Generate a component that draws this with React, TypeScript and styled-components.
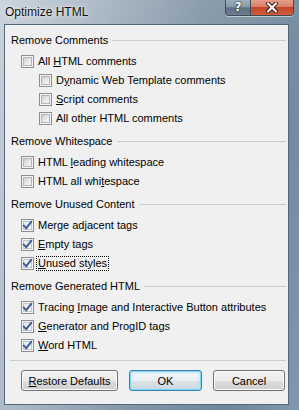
import React from 'react';
import styled, { createGlobalStyle } from 'styled-components';

const GlobalStyle = createGlobalStyle`
  html, body {
    margin: 0;
    padding: 0;
    background: #6f8aa3;
  }
`;

type Option = {
  label: React.ReactNode;
  checked?: boolean;
  nested?: boolean;
  focused?: boolean;
};

type Section = {
  title: string;
  options: Option[];
};

// mnemonic helper: underline one letter
const K = ({ children }: { children: React.ReactNode }) => <Key>{children}</Key>;

const sections: Section[] = [
  {
    title: 'Remove Comments',
    options: [
      { label: <>All <K>H</K>TML comments</> },
      { label: <>D<K>y</K>namic Web Template comments</>, nested: true },
      { label: <><K>S</K>cript comments</>, nested: true },
      { label: <>All other HTML comments</>, nested: true },
    ],
  },
  {
    title: 'Remove Whitespace',
    options: [
      { label: <>HTML <K>l</K>eading whitespace</> },
      { label: <>HTML all whi<K>t</K>espace</> },
    ],
  },
  {
    title: 'Remove Unused Content',
    options: [
      { label: <>Merge ad<K>j</K>acent tags</>, checked: true },
      { label: <><K>E</K>mpty tags</>, checked: true },
      { label: <><K>U</K>nused styles</>, checked: true, focused: true },
    ],
  },
  {
    title: 'Remove Generated HTML',
    options: [
      { label: <>Tracing <K>I</K>mage and Interactive Button attributes</>, checked: true },
      { label: <><K>G</K>enerator and ProgID tags</>, checked: true },
      { label: <><K>W</K>ord HTML</>, checked: true },
    ],
  },
];

const CheckBox: React.FC<{ checked?: boolean }> = ({ checked }) => (
  <BoxOuter>
    <BoxInner $checked={checked}>
      {checked && (
        <svg width="11" height="11" viewBox="0 0 11 11">
          <path d="M1.8 5.6 L4.2 8.2 L9.2 1.8" fill="none" stroke="#3d5b94" strokeWidth="1.9" strokeLinecap="square" />
        </svg>
      )}
    </BoxInner>
  </BoxOuter>
);

const App: React.FC = () => {
  return (
    <>
      <GlobalStyle />
      <Window>
        <TitleBar>
          <Title>Optimize HTML</Title>
          <CaptionButtons>
            <HelpButton>?</HelpButton>
            <CloseButton>
              <svg width="14" height="11" viewBox="0 0 14 11">
                <path d="M3 1.5 L11 9.5 M11 1.5 L3 9.5" stroke="#3a1a14" strokeWidth="4" strokeLinecap="round" />
                <path d="M3 1.5 L11 9.5 M11 1.5 L3 9.5" stroke="#ffffff" strokeWidth="2.2" strokeLinecap="round" />
              </svg>
            </CloseButton>
          </CaptionButtons>
        </TitleBar>
        <Client>
          <Body>
            {sections.map((s) => (
              <Group key={s.title}>
                <Heading>
                  <span>{s.title}</span>
                  <Rule />
                </Heading>
                {s.options.map((o, i) => (
                  <Row key={i} $nested={o.nested}>
                    <CheckBox checked={o.checked} />
                    <Label $focused={o.focused}>{o.label}</Label>
                  </Row>
                ))}
              </Group>
            ))}
          </Body>
          <Separator />
          <ButtonRow>
            <Button $w={97}>
              <K>R</K>estore Defaults
            </Button>
            <Button $w={73} $default>OK</Button>
            <Button $w={72}>Cancel</Button>
          </ButtonRow>
        </Client>
      </Window>
    </>
  );
};

export default App;

const Window = styled.div`
  width: 299px;
  height: 410px;
  display: flex;
  flex-direction: column;
  background:
    linear-gradient(180deg, rgba(255,255,255,0.08) 0%, rgba(255,255,255,0) 30%),
    linear-gradient(100deg, #c7d1da 0%, #a9b7c3 25%, #8295a6 55%, #6f879c 80%, #7f98ae 100%);
  overflow: hidden;
`;

const TitleBar = styled.div`
  height: 24px;
  display: flex;
  align-items: flex-start;
  padding: 0 5px;
`;

const Title = styled.div`
  font-family: "Liberation Sans", Arial, sans-serif;
  font-size: 12px;
  line-height: 24px;
  color: #101010;
  text-shadow: 0 0 6px rgba(255, 255, 255, 0.9), 0 0 2px rgba(255, 255, 255, 0.7);
`;

const CaptionButtons = styled.div`
  margin-left: auto;
  display: flex;
  margin-top: -1px;
  border: 1px solid #3f4a55;
  border-top: none;
  border-radius: 0 0 4px 4px;
  overflow: hidden;
  box-shadow: 0 1px 0 rgba(255, 255, 255, 0.5);
`;

const HelpButton = styled.div`
  width: 24px;
  height: 16px;
  display: flex;
  align-items: center;
  justify-content: center;
  font-family: "DejaVu Sans", sans-serif;
  font-weight: bold;
  font-size: 12px;
  color: #fff;
  text-shadow: 0 0 2px #222, 0 0 1px #000;
  background: linear-gradient(180deg, #9fb0bf 0%, #8798a8 50%, #5d6f80 55%, #6c7f91 100%);
  border-right: 1px solid #3f4a55;
`;

const CloseButton = styled.div`
  width: 42px;
  height: 16px;
  display: flex;
  align-items: center;
  justify-content: center;
  background: linear-gradient(180deg, #e8a493 0%, #d88069 48%, #c2452b 52%, #d25c3c 100%);
`;

const Client = styled.div`
  flex: 1;
  margin: 0 10px 5px 4px;
  background: #f0f0f0;
  border: 1px solid #55687b;
  display: flex;
  flex-direction: column;
  font-family: "Liberation Sans", Arial, sans-serif;
  font-size: 11px;
  color: #000;
`;

const Body = styled.div`
  padding: 8px 2px 0 6px;
  display: flex;
  flex-direction: column;
  gap: 6px;
`;

const Group = styled.div`
  display: flex;
  flex-direction: column;
`;

const Heading = styled.div`
  height: 14px;
  display: flex;
  align-items: center;
  gap: 4px;
  margin-bottom: 5px;
  white-space: nowrap;
`;

const Rule = styled.div`
  flex: 1;
  height: 0;
  border-top: 1px solid #c9ccd0;
  margin-top: 1px;
`;

const Row = styled.div<{ $nested?: boolean }>`
  height: 19px;
  display: flex;
  align-items: center;
  gap: 3px;
  padding-left: ${(p) => (p.$nested ? '28px' : '10px')};
`;

const BoxOuter = styled.div`
  width: 13px;
  height: 13px;
  box-sizing: border-box;
  border: 1px solid #8e8f8f;
  background: #f4f4f4;
  padding: 1px;
  flex-shrink: 0;
`;

const BoxInner = styled.div<{ $checked?: boolean }>`
  width: 100%;
  height: 100%;
  box-sizing: border-box;
  display: flex;
  align-items: center;
  justify-content: center;
  border: 1px solid ${(p) => (p.$checked ? '#c2c6cc' : '#b2b5ba')};
  background: ${(p) =>
    p.$checked
      ? 'linear-gradient(135deg, #e6e8eb 0%, #f8f8f8 100%)'
      : 'linear-gradient(135deg, #cdd0d4 0%, #e9eaeb 60%, #f7f7f7 100%)'};
  overflow: visible;

  svg {
    margin: -2px;
  }
`;

const Label = styled.span<{ $focused?: boolean }>`
  white-space: nowrap;
  line-height: 13px;
  padding: 0 1px;
  outline: ${(p) => (p.$focused ? '1px dotted #000' : 'none')};
  outline-offset: 0;
`;

const Key = styled.span`
  text-decoration: underline;
  text-underline-offset: 1px;
`;

const Separator = styled.div`
  margin: 5px 2px 0 5px;
  border-top: 1px solid #c9ccd0;
`;

const ButtonRow = styled.div`
  display: flex;
  gap: 11px;
  padding: 9px 0 0 16px;
`;

const Button = styled.div<{ $default?: boolean; $w: number }>`
  width: ${(p) => p.$w}px;
  height: 21px;
  box-sizing: border-box;
  flex-shrink: 0;
  display: flex;
  align-items: center;
  justify-content: center;
  border-radius: 3px;
  border: 1px solid ${(p) => (p.$default ? '#3c7fb1' : '#707070')};
  background: ${(p) =>
    p.$default
      ? 'linear-gradient(180deg, #f2f6f8 0%, #eaeff2 50%, #dbe3e8 51%, #cfd9df 100%)'
      : 'linear-gradient(180deg, #f2f2f2 0%, #ebebeb 50%, #dddddd 51%, #cfcfcf 100%)'};
  box-shadow: ${(p) =>
    p.$default
      ? 'inset 0 0 0 1px #7fd6f7, inset 0 0 2px 2px rgba(150, 220, 250, 0.45)'
      : 'inset 0 0 0 1px #fcfcfc'};
  white-space: nowrap;
`;
